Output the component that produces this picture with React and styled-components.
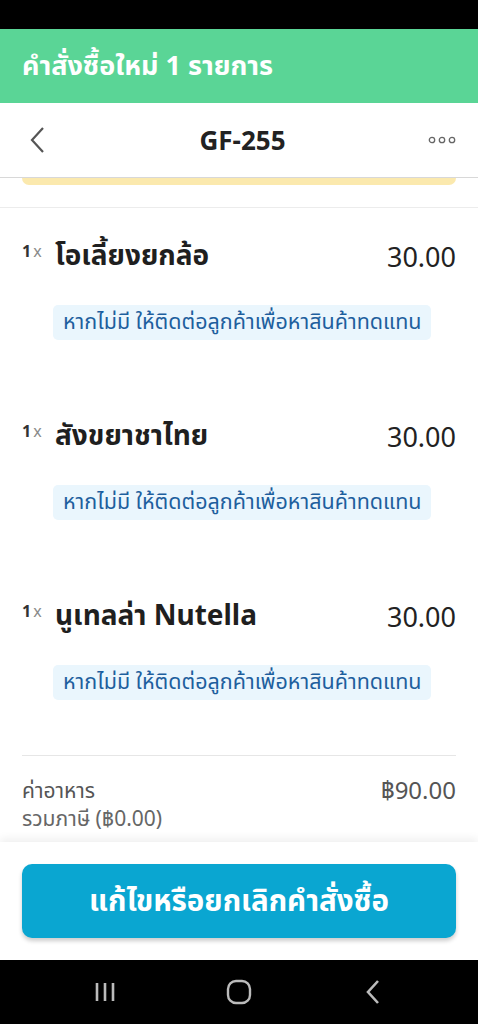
import React from "react";
import styled, { createGlobalStyle } from "styled-components";

const GlobalStyle = createGlobalStyle`
  html, body {
    margin: 0;
    padding: 0;
    background: #000;
  }
  body {
    font-family: "Noto Sans", "Noto Sans Thai", "Noto Sans Thai UI", sans-serif;
    -webkit-font-smoothing: antialiased;
  }
`;

const Screen = styled.div`
  width: 478px;
  height: 1024px;
  display: flex;
  flex-direction: column;
  background: #fff;
  overflow: hidden;
`;

const StatusBar = styled.div`
  height: 29px;
  background: #000;
  flex-shrink: 0;
`;

const Banner = styled.div`
  height: 74px;
  background: #5ad596;
  color: #fff;
  display: flex;
  align-items: center;
  padding: 0 22px;
  font-size: 27px;
  font-weight: 700;
  flex-shrink: 0;
`;

const Header = styled.div`
  height: 74px;
  display: flex;
  align-items: center;
  justify-content: space-between;
  padding: 0 22px 0 29px;
  border-bottom: 1px solid #d8d8d8;
  flex-shrink: 0;
`;

const IconButton = styled.button`
  width: 34px;
  height: 34px;
  display: flex;
  align-items: center;
  justify-content: ${(p) => p.$align || "center"};
  background: none;
  border: none;
  padding: 0;
`;

const Title = styled.h1`
  margin: 0;
  font-size: 26px;
  font-weight: 700;
  color: #222;
`;

const Content = styled.div`
  flex: 1;
  overflow: hidden;
`;

const NoticeStub = styled.div`
  height: 7px;
  margin: 0 22px;
  background: #fbe9ae;
  border-radius: 0 0 8px 8px;
`;

const ItemList = styled.div`
  margin-top: 22px;
  border-top: 1px solid #ececec;
  padding: 0 22px;
`;

const Item = styled.div`
  padding: 30px 0 48px;
`;

const ItemRow = styled.div`
  display: flex;
  align-items: center;
  height: 36px;
`;

const Qty = styled.span`
  align-self: flex-start;
  margin-top: 2px;
  width: 33px;
  font-size: 16px;
  font-weight: 700;
  color: #333;

  span {
    font-weight: 400;
    color: #8a8a8a;
    margin-left: 2px;
  }
`;

const ItemName = styled.span`
  flex: 1;
  font-size: 28px;
  font-weight: 700;
  color: #1f1f1f;
`;

const Price = styled.span`
  font-size: 27px;
  color: #222;
`;

const NoteTag = styled.div`
  display: inline-flex;
  align-items: center;
  height: 35px;
  margin: 31px 0 0 31px;
  padding: 0 10px;
  border-radius: 5px;
  background: #eaf6fd;
  color: #1e5f9e;
  font-size: 21.5px;
`;

const Summary = styled.div`
  margin: 7px 22px 0;
  padding-top: 20px;
  border-top: 1px solid #e6e6e6;
  display: flex;
  justify-content: space-between;
  color: #555;
`;

const SummaryLabel = styled.div`
  font-size: 21px;
  line-height: 28px;

  small {
    display: block;
    font-size: 21px;
    line-height: 28px;
    color: #666;
  }
`;

const SummaryValue = styled.div`
  font-size: 24px;
  line-height: 28px;
`;

const Footer = styled.div`
  height: 118px;
  flex-shrink: 0;
  display: flex;
  align-items: flex-start;
  padding: 22px 22px 0;
  box-sizing: border-box;
  background: #fff;
  box-shadow: 0 -4px 8px rgba(0, 0, 0, 0.06);
  position: relative;
`;

const ActionButton = styled.button`
  width: 100%;
  height: 74px;
  border: none;
  border-radius: 10px;
  background: #0aa6d1;
  color: #fff;
  font-family: inherit;
  font-size: 29.5px;
  font-weight: 700;
  box-shadow: 0 3px 4px rgba(0, 0, 0, 0.2);
`;

const NavBar = styled.div`
  height: 64px;
  flex-shrink: 0;
  background: #000;
  display: flex;
  align-items: center;
  justify-content: space-around;
  padding: 0 38px;
`;

const NavSlot = styled.div`
  width: 60px;
  display: flex;
  justify-content: center;
`;

const items = [
  { name: "โอเลี้ยงยกล้อ", price: "30.00" },
  { name: "สังขยาชาไทย", price: "30.00" },
  { name: "นูเทลล่า Nutella", price: "30.00" },
];

const note = "หากไม่มี ให้ติดต่อลูกค้าเพื่อหาสินค้าทดแทน";

export default function App() {
  return (
    <>
      <GlobalStyle />
      <Screen>
        <StatusBar />
        <Banner>คำสั่งซื้อใหม่ 1 รายการ</Banner>
        <Header>
          <IconButton $align="flex-start">
            <svg width="16" height="26" viewBox="0 0 16 26">
              <path d="M14 1 L3 13 L14 25" fill="none" stroke="#555" strokeWidth="2.2" />
            </svg>
          </IconButton>
          <Title>GF-255</Title>
          <IconButton $align="flex-end">
            <svg width="28" height="8" viewBox="0 0 28 8">
              <circle cx="4" cy="4" r="2.7" fill="none" stroke="#666" strokeWidth="1.3" />
              <circle cx="14" cy="4" r="2.7" fill="none" stroke="#666" strokeWidth="1.3" />
              <circle cx="24" cy="4" r="2.7" fill="none" stroke="#666" strokeWidth="1.3" />
            </svg>
          </IconButton>
        </Header>
        <Content>
          <NoticeStub />
          <ItemList>
            {items.map((it) => (
              <Item key={it.name}>
                <ItemRow>
                  <Qty>
                    1<span>x</span>
                  </Qty>
                  <ItemName>{it.name}</ItemName>
                  <Price>{it.price}</Price>
                </ItemRow>
                <NoteTag>{note}</NoteTag>
              </Item>
            ))}
          </ItemList>
          <Summary>
            <SummaryLabel>
              ค่าอาหาร
              <small>รวมภาษี (฿0.00)</small>
            </SummaryLabel>
            <SummaryValue>฿90.00</SummaryValue>
          </Summary>
        </Content>
        <Footer>
          <ActionButton>แก้ไขหรือยกเลิกคำสั่งซื้อ</ActionButton>
        </Footer>
        <NavBar>
          <NavSlot>
            <svg width="24" height="22" viewBox="0 0 24 22">
              <path d="M4 2v18M12 2v18M20 2v18" stroke="#bbb" strokeWidth="2.6" />
            </svg>
          </NavSlot>
          <NavSlot>
            <svg width="26" height="26" viewBox="0 0 26 26">
              <rect x="2" y="2" width="22" height="22" rx="8" fill="none" stroke="#bbb" strokeWidth="2.4" />
            </svg>
          </NavSlot>
          <NavSlot>
            <svg width="16" height="26" viewBox="0 0 16 26">
              <path d="M13 2 L3 13 L13 24" fill="none" stroke="#bbb" strokeWidth="2.6" />
            </svg>
          </NavSlot>
        </NavBar>
      </Screen>
    </>
  );
}
